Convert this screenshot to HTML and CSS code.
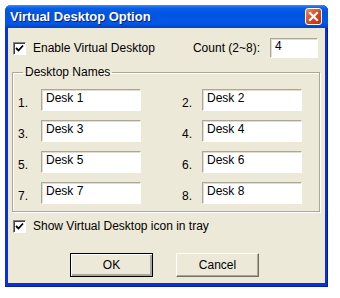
FILE: index.html
```html
<!DOCTYPE html>
<html>
<head>
    <title>Virtual Desktop Option</title>
    <link rel="stylesheet" href="styles.css">
</head>
<body>
    <div class="window">
        <div class="titlebar">
            <span class="title">Virtual Desktop Option</span>
            <span class="close">
                <svg width="11" height="11" viewBox="0 0 11 11">
                    <path d="M2 2 L9 9 M9 2 L2 9" stroke="#fff" stroke-width="2.2" stroke-linecap="square"/>
                </svg>
            </span>
        </div>

        <div class="client">
            <div class="top-row">
                <label class="check">
                    <span class="box">
                        <svg width="9" height="9" viewBox="0 0 9 9"><path d="M1 4 L3.5 6.5 L8 1.5" stroke="#000" stroke-width="1.8" fill="none"/></svg>
                    </span>
                    Enable Virtual Desktop
                </label>
                <div class="count">
                    <span>Count (2~8):</span>
                    <input class="edit count-edit" type="text" value="4">
                </div>
            </div>

            <fieldset class="group">
                <legend>Desktop Names</legend>
                <div class="names">
                    <div class="field"><span class="num">1.</span><input class="edit" type="text" value="Desk 1"></div>
                    <div class="field"><span class="num">2.</span><input class="edit" type="text" value="Desk 2"></div>
                    <div class="field"><span class="num">3.</span><input class="edit" type="text" value="Desk 3"></div>
                    <div class="field"><span class="num">4.</span><input class="edit" type="text" value="Desk 4"></div>
                    <div class="field"><span class="num">5.</span><input class="edit" type="text" value="Desk 5"></div>
                    <div class="field"><span class="num">6.</span><input class="edit" type="text" value="Desk 6"></div>
                    <div class="field"><span class="num">7.</span><input class="edit" type="text" value="Desk 7"></div>
                    <div class="field"><span class="num">8.</span><input class="edit" type="text" value="Desk 8"></div>
                </div>
            </fieldset>

            <label class="check tray">
                <span class="box">
                    <svg width="9" height="9" viewBox="0 0 9 9"><path d="M1 4 L3.5 6.5 L8 1.5" stroke="#000" stroke-width="1.8" fill="none"/></svg>
                </span>
                Show Virtual Desktop icon in tray
            </label>

            <div class="buttons">
                <button class="btn default">OK</button>
                <button class="btn">Cancel</button>
            </div>
        </div>
    </div>
</body>
</html>
```

FILE: styles.css
```css
body {
    margin: 0;
    background: #fff;
    font-family: "Liberation Sans", Arial, sans-serif;
    font-size: 12px;
    color: #000;
}
.window {
    width: 323px;
    height: 282px;
    margin: 5px 0 0 5px;
    padding: 0 3px 4px 3px;
    box-sizing: border-box;
    background: #0831d9;
    border-radius: 6px 6px 0 0;
    display: flex;
    flex-direction: column;
    box-shadow: inset 0 -1px #001ea0, inset -1px 0 #001ea0;
}
.titlebar {
    height: 23px;
    margin: 0 -3px;
    padding: 0 6px 0 5px;
    border-radius: 6px 6px 0 0;
    background: linear-gradient(#3c8cf8 0, #0a5fe8 3px, #0054e3 8px, #0458e6 18px, #0042c8 23px);
    display: flex;
    align-items: center;
    justify-content: space-between;
}
.title {
    color: #fff;
    font-weight: bold;
    font-size: 13px;
    text-shadow: 1px 1px #0a1e6e;
}
.close {
    width: 15px;
    height: 15px;
    border: 1px solid #fff;
    border-radius: 3px;
    background: linear-gradient(135deg, #e88a6c, #d8431a 55%, #c0300e);
    display: flex;
    align-items: center;
    justify-content: center;
}
.client {
    flex: 1;
    background: #ece9d8;
    padding: 10px 7px 0 5px;
}
.top-row {
    display: flex;
    justify-content: space-between;
    align-items: center;
    height: 20px;
}
.check {
    display: flex;
    align-items: center;
    gap: 7px;
}
.box {
    width: 11px;
    height: 11px;
    background: #fff;
    border: 1px solid;
    border-color: #808080 #fff #fff #808080;
    box-shadow: inset 1px 1px #404040;
    display: flex;
    align-items: center;
    justify-content: center;
}
.count {
    display: flex;
    align-items: center;
    gap: 10px;
}
.edit {
    width: 100px;
    height: 22px;
    box-sizing: border-box;
    margin: 0;
    padding: 1px 4px 5px;
    border: 1px solid;
    border-color: #aca899 #fff #fff #aca899;
    box-shadow: inset 1px 1px #e0ddd0;
    background: #fff;
    font-family: "Liberation Sans", Arial, sans-serif;
    font-size: 12px;
    color: #000;
    outline: none;
}
.count-edit {
    width: 48px;
    height: 20px;
}
.group {
    margin: 7px 0 0 -1px;
    width: 308px;
    box-sizing: border-box;
    padding: 10px 4px 7px 5px;
    border: 1px solid #aca899;
    box-shadow: 1px 1px #fff, inset 1px 1px #fff;
}
.group legend {
    padding: 0 2px;
    margin-left: 5px;
}
.names {
    display: grid;
    grid-template-columns: 164px 120px;
    row-gap: 9px;
}
.field {
    display: flex;
    align-items: center;
}
.num {
    width: 23px;
    padding-top: 5px;
}
.tray {
    margin-top: 7px;
}
.buttons {
    display: flex;
    gap: 23px;
    margin: 20px 0 0 57px;
}
.btn {
    width: 83px;
    height: 24px;
    margin: 0;
    padding: 0;
    background: #ece9d8;
    font-family: "Liberation Sans", Arial, sans-serif;
    font-size: 12px;
    color: #000;
    border: 1px solid;
    border-color: #fff #716f64 #716f64 #fff;
    box-shadow: inset -1px -1px #aca899;
}
.btn.default {
    border: 1px solid #000;
    box-shadow: inset 1px 1px #fff, inset -2px -2px #aca899, inset -1px -1px #716f64;
}
```
